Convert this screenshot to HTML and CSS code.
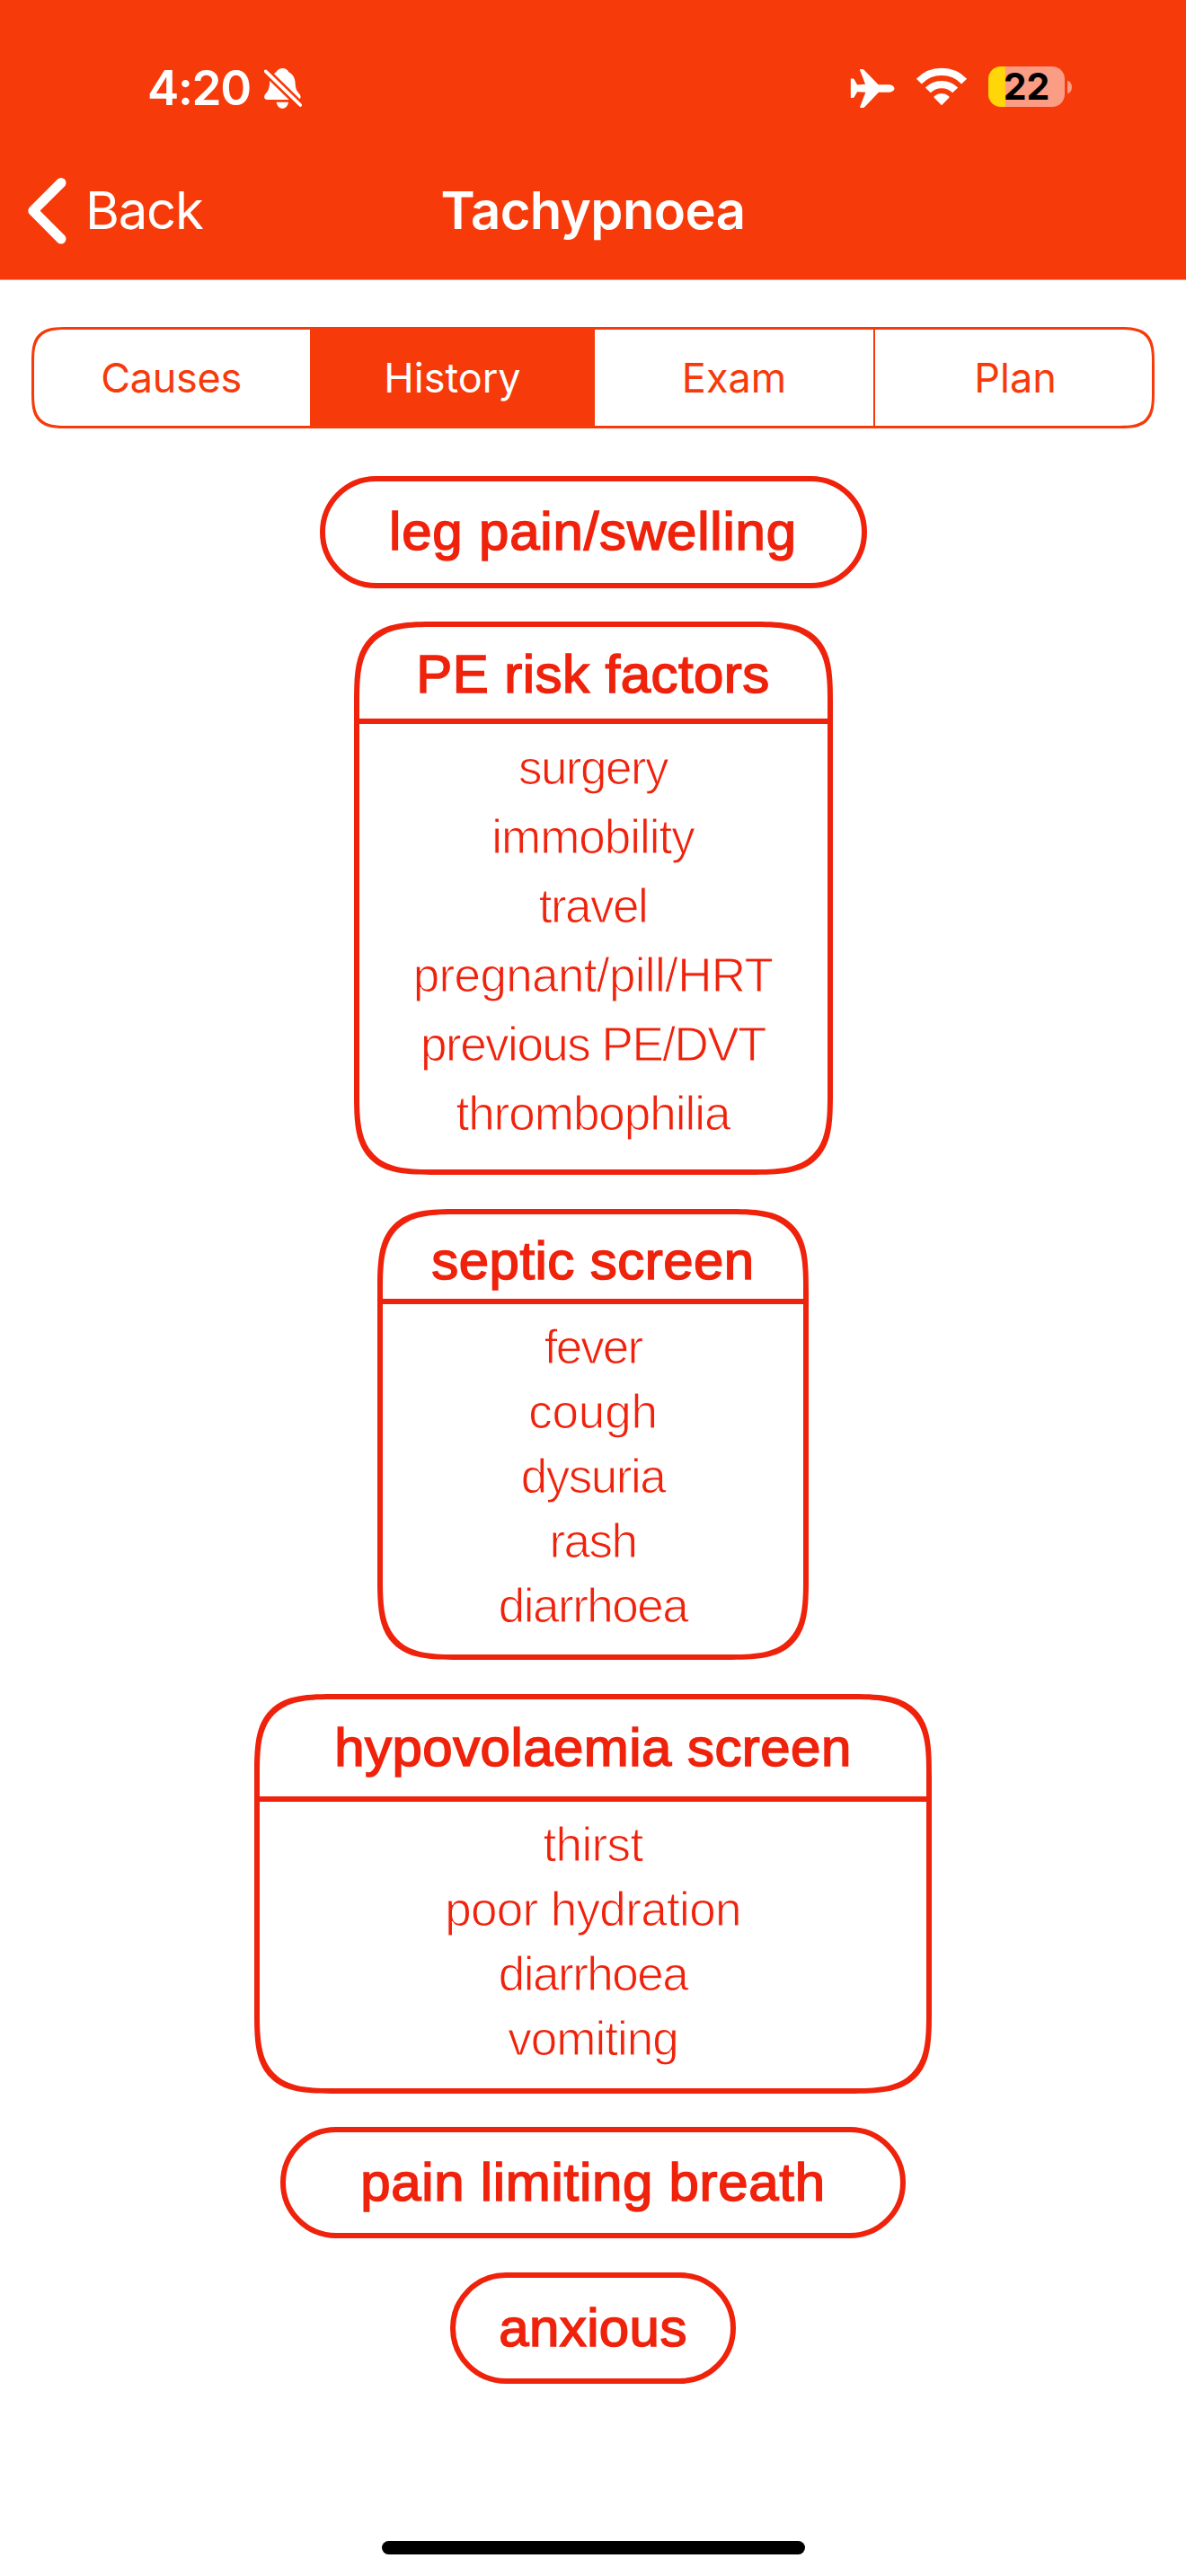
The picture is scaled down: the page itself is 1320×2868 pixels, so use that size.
FILE: index.html
```html
<!DOCTYPE html>
<html lang="en">
<head>
<meta charset="utf-8">
<title>Tachypnoea</title>
<link rel="stylesheet" href="styles.css">
</head>
<body>
<header class="header">
  <div class="status">
    <div class="status-left">
      <span class="time">4:20</span>
      <svg class="icon-bell" viewBox="27 30 126 138" aria-hidden="true">
        <path fill="#fff" d="M88 33C77 33 70 40 67 46C52 55 46 68 45 85C44 103 40 109 32 118C25 126 25 138 38 138H138C151 138 151 126 144 118C136 109 132 103 131 85C130 65 124 54 109 46C106 38 98 33 88 33Z"/>
        <path fill="#fff" d="M68 146H108C106 160 97 167 88 167S70 160 68 146Z"/>
        <path class="slash-gap" d="M22 33L158 166"/>
        <path class="slash" d="M32 43L148 156"/>
      </svg>
    </div>
    <div class="status-right">
      <svg class="icon-plane" viewBox="34 32 150 136" aria-hidden="true">
        <path fill="#fff" d="M36 67H43C45 67 47 68 48 70L58 88L85 86L67 39C66 36 67 35 69 35H75C78 35 80 37 82 39L129 87H162C174 87 183 93 183 100S174 113 162 113H130L84 161C81 164 79 165 75 165H70C67 165 66 163 68 160L86 113L58 111L48 129C46 131 45 132 43 132H36Z"/>
      </svg>
      <svg class="icon-wifi" viewBox="253 29 174 130" aria-hidden="true">
        <g fill="none" stroke="#fff" stroke-width="25">
          <path d="M264 76A106 106 0 0 1 416 76"/>
          <path d="M294 106A64 64 0 0 1 386 106"/>
        </g>
        <path fill="#fff" d="M340 157L315 131Q313 128 316 126A36 36 0 0 1 364 126Q367 128 365 131Z"/>
      </svg>
      <div class="battery">
        <div class="battery-body">22</div>
        <div class="battery-nub"></div>
      </div>
    </div>
  </div>
  <nav class="nav">
    <a class="back">
      <svg class="icon-back" viewBox="0 0 44 76" aria-hidden="true">
        <path d="M38 6.5L6.8 37.7L38 69"/>
      </svg>
      <span>Back</span>
    </a>
    <h1 class="title">Tachypnoea</h1>
  </nav>
</header>

<div class="tabs">
  <div class="tab tab-causes">Causes</div>
  <div class="tab tab-active">History</div>
  <div class="tab tab-exam">Exam</div>
  <div class="tab tab-plan">Plan</div>
</div>

<main class="list">
  <div class="pill pill-leg">leg pain/swelling</div>

  <section class="card card-pe">
    <h2>PE risk factors</h2>
    <ul>
      <li class="tight">surgery</li>
      <li>immobility</li>
      <li class="tight">travel</li>
      <li class="loose">pregnant/pill/HRT</li>
      <li class="tight">previous PE/DVT</li>
      <li>thrombophilia</li>
    </ul>
  </section>

  <section class="card card-septic">
    <h2>septic screen</h2>
    <ul>
      <li class="tighter">fever</li>
      <li class="open">cough</li>
      <li class="tight">dysuria</li>
      <li class="tight">rash</li>
      <li class="tight">diarrhoea</li>
    </ul>
  </section>

  <section class="card card-hypo">
    <h2>hypovolaemia screen</h2>
    <ul>
      <li class="loose">thirst</li>
      <li class="loose">poor hydration</li>
      <li class="tight">diarrhoea</li>
      <li>vomiting</li>
    </ul>
  </section>

  <div class="pill pill-pain">pain limiting breath</div>
  <div class="pill pill-anxious">anxious</div>
</main>

<footer class="home"><div class="home-bar"></div></footer>
</body>
</html>
```
FILE: styles.css
```css
:root {
  --orange: #f63a0a;
  --red: #ef220c;
}

* { box-sizing: border-box; }

body {
  margin: 0;
  width: 1320px;
  height: 2868px;
  display: flex;
  flex-direction: column;
  background: #fff;
  font-family: "Liberation Sans", Arial, sans-serif;
  overflow: hidden;
}

/* Header */
.header {
  height: 312px;
  padding-top: 66px;
  background: var(--orange);
  border-bottom: 1px solid #b9adb0;
  color: #fff;
  font-family: Inter, sans-serif;
}

.status {
  height: 64px;
  padding: 0 127px 0 164px;
  display: flex;
  justify-content: space-between;
  align-items: center;
}

.status-left { display: flex; align-items: center; gap: 15px; }
.status-right { display: flex; align-items: center; gap: 23px; }

.time {
  font-size: 53px;
  line-height: 64px;
  font-weight: 600;
  letter-spacing: -1.3px;
}

.icon-bell { width: 42px; height: 46px; }
.slash-gap { fill: none; stroke: var(--orange); stroke-width: 27; }
.slash { fill: none; stroke: #fff; stroke-width: 11; stroke-linecap: round; }
.icon-plane { width: 50px; height: 45px; }
.icon-wifi { width: 58px; height: 43px; margin-bottom: 3px; }

.battery { display: flex; align-items: center; gap: 3px; margin-bottom: 3px; }

.battery-body {
  width: 85px;
  height: 45px;
  border-radius: 14px;
  background: linear-gradient(90deg, #ffd60a 19px, #fb9c84 19px);
  color: #000;
  font-size: 41px;
  line-height: 45px;
  font-weight: 650;
  text-align: center;
}

.battery-nub {
  width: 5px;
  height: 14px;
  border-radius: 0 5px 5px 0 / 0 7px 7px 0;
  background: #fb9c84;
}

.nav {
  height: 70px;
  margin-top: 67px;
  padding: 0 30px;
  display: grid;
  grid-template-columns: 1fr auto 1fr;
  align-items: center;
  font-size: 58px;
  line-height: 70px;
}

.back { display: flex; align-items: center; gap: 21px; letter-spacing: -1.2px; }
.icon-back { width: 44px; height: 76px; flex: none; }

.icon-back path {
  fill: none;
  stroke: #fff;
  stroke-width: 11;
  stroke-linecap: round;
  stroke-linejoin: round;
}

.title { margin: 0; font-size: 58px; font-weight: 600; letter-spacing: -0.6px; }

.back span,
.title { padding-bottom: 2px; }

/* Segmented control */
.tabs {
  width: 1250px;
  height: 113px;
  margin: 52px 0 0 35px;
  display: grid;
  grid-template-columns: 307px 317px 312px 308px;
  border: 3px solid var(--orange);
  border-radius: 30px;
  color: var(--orange);
  font-family: Inter, sans-serif;
  font-size: 45px;
}

.tab { display: flex; align-items: center; justify-content: center; }
.tab-causes { padding-right: 2px; letter-spacing: -0.3px; }
.tab-active { background: var(--orange); color: #fff; }
.tab-exam { border-right: 2px solid var(--orange); }
.tab-plan { padding-left: 4px; }

/* History items */
.list {
  margin-top: 53px;
  display: flex;
  flex-direction: column;
  align-items: center;
  gap: 38px;
  color: var(--red);
}

.pill {
  height: 124px;
  padding-bottom: 2px;
  display: flex;
  align-items: center;
  justify-content: center;
  border: 6px solid var(--red);
  border-radius: 63px;
  font-size: 60px;
  -webkit-text-stroke: 1.6px var(--red);
}

.pill-leg { width: 609px; height: 125px; margin-bottom: -1px; letter-spacing: 0.8px; }
.pill-pain { width: 696px; margin-top: -1px; letter-spacing: 0.7px; }
.pill-anxious { width: 318px; letter-spacing: 0.4px; }

.card { border: 6px solid var(--red); border-radius: 60px; }

/* Continuous corners where the browser can draw them */
@supports (corner-shape: squircle) {
  .card { border-radius: 92px; corner-shape: superellipse(1.7); }
  .tabs { border-radius: 42px; corner-shape: superellipse(1.7); }
}

.card h2 {
  margin: 0;
  display: flex;
  align-items: center;
  justify-content: center;
  border-bottom: 6px solid var(--red);
  font-size: 60px;
  font-weight: 400;
  letter-spacing: 0.45px;
  -webkit-text-stroke: 1.6px var(--red);
}

/* A background-coloured stroke trims the glyphs down to a light weight */
.card ul {
  margin: 0;
  padding: 12px 0 0;
  list-style: none;
  text-align: center;
  font-size: 53px;
  line-height: 72px;
  letter-spacing: -1px;
  -webkit-text-stroke: 1px #fff;
}

.card .tighter { letter-spacing: -1.9px; }
.card .tight { letter-spacing: -1.5px; }
.card .loose { letter-spacing: -0.65px; }
.card .open { letter-spacing: -0.2px; }

.card-pe { width: 533px; height: 616px; }
.card-pe h2 { height: 108px; padding-top: 3px; }
.card-pe ul { padding-top: 10px; line-height: 77.1px; }

.card-septic { width: 480px; height: 502px; }
.card-septic h2 { height: 100px; padding-top: 8px; }

.card-hypo { width: 754px; height: 445px; }
.card-hypo h2 { height: 114px; padding-bottom: 2px; }

/* Home indicator */
.home { margin-top: auto; padding-bottom: 24px; }

.home-bar {
  width: 471px;
  height: 15px;
  margin: 0 auto;
  border-radius: 8px;
  background: #000;
}
```
